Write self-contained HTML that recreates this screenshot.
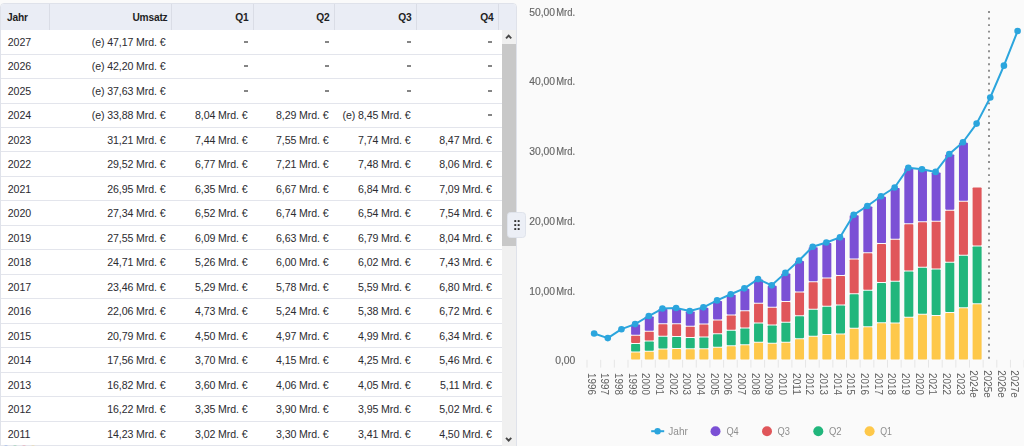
<!DOCTYPE html>
<html><head><meta charset="utf-8">
<style>
html,body{margin:0;padding:0;}
body{width:1024px;height:446px;overflow:hidden;background:#fafafa;position:relative;font-family:"Liberation Sans",sans-serif;}
#panel{position:absolute;left:0;top:3px;width:517px;height:460px;background:#fff;border:1px solid #dfe2ea;border-radius:4px 4px 0 0;box-sizing:border-box;overflow:hidden;}
#head{position:absolute;left:0;top:0;right:0;height:26px;background:#eaedf5;}
#head div{position:absolute;top:0;height:26px;line-height:28.6px;font-size:10.2px;letter-spacing:-0.2px;font-weight:bold;color:#1f1f24;box-sizing:border-box;border-right:1px solid #dadde6;}
#head .c0{padding-left:6px;} #head .c1{padding-right:3px;} #head .c2,#head .c3,#head .c4,#head .c5{padding-right:4px;}
#body{position:absolute;left:0;top:0;width:501px;height:460px;}
.dv{position:absolute;left:0;width:501px;height:1px;background:#e3e5ec;}
.r{position:absolute;left:0;width:501px;height:12px;}
.r div{position:absolute;top:0;height:12px;line-height:12px;letter-spacing:-0.1px;font-size:10.6px;color:#2b2b30;box-sizing:border-box;white-space:nowrap;}
.c0{left:0;width:49px;padding-left:6.8px;text-align:left;}
.c1{left:49px;width:121.5px;padding-right:6px;text-align:right;}
.c2{left:170.5px;width:82px;padding-right:6px;text-align:right;}
.c3{left:252.5px;width:81px;padding-right:6px;text-align:right;}
.c4{left:333.5px;width:82px;padding-right:6px;text-align:right;}
.c5{left:415.5px;width:82px;padding-right:6.8px;text-align:right;}
span.dash{display:inline-block;width:3.4px;height:2px;background:#858585;vertical-align:top;margin-top:4.7px;margin-right:0px;}
#sb{position:absolute;left:501px;top:26px;width:14px;height:440px;background:#f0f0f0;}
#thumb{position:absolute;left:0;top:14px;width:14px;height:202px;background:#c8c8c8;}
#handle{position:absolute;left:506.5px;top:212px;width:19px;height:25.5px;background:#eceff6;border:1px solid #dfe3eb;border-radius:3.5px;box-sizing:border-box;}
svg{position:absolute;left:0;top:0;}
.ax{font-size:10.2px;fill:#666;stroke:#666;stroke-width:0.15px;font-family:"Liberation Sans",sans-serif;}
.xl{font-size:10px;fill:#606060;font-family:"Liberation Sans",sans-serif;}
.lg{font-size:10.6px;fill:#8f8f8f;font-family:"Liberation Sans",sans-serif;}
</style></head><body>
<div id="panel">
<div id="head">
<div class="c0">Jahr</div><div class="c1">Umsatz</div><div class="c2">Q1</div><div class="c3">Q2</div><div class="c4">Q3</div><div class="c5">Q4</div>
</div>
<div id="body">
<div class="dv" style="top:49.60px"></div><div class="r" style="top:32.00px"><div class="c0">2027</div><div class="c1">(e) 47,17 Mrd. €</div><div class="c2"><span class="dash"></span></div><div class="c3"><span class="dash"></span></div><div class="c4"><span class="dash"></span></div><div class="c5"><span class="dash"></span></div></div><div class="dv" style="top:74.07px"></div><div class="r" style="top:56.47px"><div class="c0">2026</div><div class="c1">(e) 42,20 Mrd. €</div><div class="c2"><span class="dash"></span></div><div class="c3"><span class="dash"></span></div><div class="c4"><span class="dash"></span></div><div class="c5"><span class="dash"></span></div></div><div class="dv" style="top:98.54px"></div><div class="r" style="top:80.94px"><div class="c0">2025</div><div class="c1">(e) 37,63 Mrd. €</div><div class="c2"><span class="dash"></span></div><div class="c3"><span class="dash"></span></div><div class="c4"><span class="dash"></span></div><div class="c5"><span class="dash"></span></div></div><div class="dv" style="top:123.01px"></div><div class="r" style="top:105.41px"><div class="c0">2024</div><div class="c1">(e) 33,88 Mrd. €</div><div class="c2">8,04 Mrd. €</div><div class="c3">8,29 Mrd. €</div><div class="c4">(e) 8,45 Mrd. €</div><div class="c5"><span class="dash"></span></div></div><div class="dv" style="top:147.48px"></div><div class="r" style="top:129.88px"><div class="c0">2023</div><div class="c1">31,21 Mrd. €</div><div class="c2">7,44 Mrd. €</div><div class="c3">7,55 Mrd. €</div><div class="c4">7,74 Mrd. €</div><div class="c5">8,47 Mrd. €</div></div><div class="dv" style="top:171.95px"></div><div class="r" style="top:154.35px"><div class="c0">2022</div><div class="c1">29,52 Mrd. €</div><div class="c2">6,77 Mrd. €</div><div class="c3">7,21 Mrd. €</div><div class="c4">7,48 Mrd. €</div><div class="c5">8,06 Mrd. €</div></div><div class="dv" style="top:196.42px"></div><div class="r" style="top:178.82px"><div class="c0">2021</div><div class="c1">26,95 Mrd. €</div><div class="c2">6,35 Mrd. €</div><div class="c3">6,67 Mrd. €</div><div class="c4">6,84 Mrd. €</div><div class="c5">7,09 Mrd. €</div></div><div class="dv" style="top:220.89px"></div><div class="r" style="top:203.29px"><div class="c0">2020</div><div class="c1">27,34 Mrd. €</div><div class="c2">6,52 Mrd. €</div><div class="c3">6,74 Mrd. €</div><div class="c4">6,54 Mrd. €</div><div class="c5">7,54 Mrd. €</div></div><div class="dv" style="top:245.36px"></div><div class="r" style="top:227.76px"><div class="c0">2019</div><div class="c1">27,55 Mrd. €</div><div class="c2">6,09 Mrd. €</div><div class="c3">6,63 Mrd. €</div><div class="c4">6,79 Mrd. €</div><div class="c5">8,04 Mrd. €</div></div><div class="dv" style="top:269.83px"></div><div class="r" style="top:252.23px"><div class="c0">2018</div><div class="c1">24,71 Mrd. €</div><div class="c2">5,26 Mrd. €</div><div class="c3">6,00 Mrd. €</div><div class="c4">6,02 Mrd. €</div><div class="c5">7,43 Mrd. €</div></div><div class="dv" style="top:294.30px"></div><div class="r" style="top:276.70px"><div class="c0">2017</div><div class="c1">23,46 Mrd. €</div><div class="c2">5,29 Mrd. €</div><div class="c3">5,78 Mrd. €</div><div class="c4">5,59 Mrd. €</div><div class="c5">6,80 Mrd. €</div></div><div class="dv" style="top:318.77px"></div><div class="r" style="top:301.17px"><div class="c0">2016</div><div class="c1">22,06 Mrd. €</div><div class="c2">4,73 Mrd. €</div><div class="c3">5,24 Mrd. €</div><div class="c4">5,38 Mrd. €</div><div class="c5">6,72 Mrd. €</div></div><div class="dv" style="top:343.24px"></div><div class="r" style="top:325.64px"><div class="c0">2015</div><div class="c1">20,79 Mrd. €</div><div class="c2">4,50 Mrd. €</div><div class="c3">4,97 Mrd. €</div><div class="c4">4,99 Mrd. €</div><div class="c5">6,34 Mrd. €</div></div><div class="dv" style="top:367.71px"></div><div class="r" style="top:350.11px"><div class="c0">2014</div><div class="c1">17,56 Mrd. €</div><div class="c2">3,70 Mrd. €</div><div class="c3">4,15 Mrd. €</div><div class="c4">4,25 Mrd. €</div><div class="c5">5,46 Mrd. €</div></div><div class="dv" style="top:392.18px"></div><div class="r" style="top:374.58px"><div class="c0">2013</div><div class="c1">16,82 Mrd. €</div><div class="c2">3,60 Mrd. €</div><div class="c3">4,06 Mrd. €</div><div class="c4">4,05 Mrd. €</div><div class="c5">5,11 Mrd. €</div></div><div class="dv" style="top:416.65px"></div><div class="r" style="top:399.05px"><div class="c0">2012</div><div class="c1">16,22 Mrd. €</div><div class="c2">3,35 Mrd. €</div><div class="c3">3,90 Mrd. €</div><div class="c4">3,95 Mrd. €</div><div class="c5">5,02 Mrd. €</div></div><div class="dv" style="top:441.12px"></div><div class="r" style="top:423.52px"><div class="c0">2011</div><div class="c1">14,23 Mrd. €</div><div class="c2">3,02 Mrd. €</div><div class="c3">3,30 Mrd. €</div><div class="c4">3,41 Mrd. €</div><div class="c5">4,50 Mrd. €</div></div>
</div>
<div id="sb"><svg width="14" height="14" style="position:absolute;left:0;top:0"><path d="M4.05 8.4 L6.65 5.6 L9.25 8.4" fill="none" stroke="#484848" stroke-width="1.9"/></svg><div id="thumb"></div>
<svg width="14" height="14" style="position:absolute;left:0;top:402px"><path d="M4.05 5.9 L6.65 8.7 L9.25 5.9" fill="none" stroke="#484848" stroke-width="1.9"/></svg></div>
</div>
<svg width="40" height="6" style="position:absolute;left:0;top:444px">
<circle cx="6" cy="6" r="4.6" fill="#7da8e8"/><circle cx="15" cy="6" r="4.6" fill="#7cc79a"/><circle cx="24" cy="6" r="4.6" fill="#ea8f9c"/><circle cx="33" cy="6" r="4.6" fill="#efd68e"/>
</svg>
<div id="handle"><svg width="18" height="24" style="position:absolute;left:0;top:0">
<rect x="6.3" y="7.1" width="1.9" height="1.9" fill="#333"/><rect x="9.7" y="7.1" width="1.9" height="1.9" fill="#333"/>
<rect x="6.3" y="11.1" width="1.9" height="1.9" fill="#333"/><rect x="9.7" y="11.1" width="1.9" height="1.9" fill="#333"/>
<rect x="6.3" y="15.1" width="1.9" height="1.9" fill="#333"/><rect x="9.7" y="15.1" width="1.9" height="1.9" fill="#333"/>
</svg></div>
<svg width="506" height="446" viewBox="518 0 506 446" style="left:518px;will-change:transform">
<line x1="587.00" y1="359.8" x2="587.00" y2="367.6" stroke="#e6e6e6" stroke-width="1"/>
<line x1="600.66" y1="359.8" x2="600.66" y2="367.6" stroke="#e6e6e6" stroke-width="1"/>
<line x1="614.32" y1="359.8" x2="614.32" y2="367.6" stroke="#e6e6e6" stroke-width="1"/>
<line x1="627.98" y1="359.8" x2="627.98" y2="367.6" stroke="#e6e6e6" stroke-width="1"/>
<line x1="641.64" y1="359.8" x2="641.64" y2="367.6" stroke="#e6e6e6" stroke-width="1"/>
<line x1="655.30" y1="359.8" x2="655.30" y2="367.6" stroke="#e6e6e6" stroke-width="1"/>
<line x1="668.96" y1="359.8" x2="668.96" y2="367.6" stroke="#e6e6e6" stroke-width="1"/>
<line x1="682.62" y1="359.8" x2="682.62" y2="367.6" stroke="#e6e6e6" stroke-width="1"/>
<line x1="696.28" y1="359.8" x2="696.28" y2="367.6" stroke="#e6e6e6" stroke-width="1"/>
<line x1="709.94" y1="359.8" x2="709.94" y2="367.6" stroke="#e6e6e6" stroke-width="1"/>
<line x1="723.60" y1="359.8" x2="723.60" y2="367.6" stroke="#e6e6e6" stroke-width="1"/>
<line x1="737.26" y1="359.8" x2="737.26" y2="367.6" stroke="#e6e6e6" stroke-width="1"/>
<line x1="750.92" y1="359.8" x2="750.92" y2="367.6" stroke="#e6e6e6" stroke-width="1"/>
<line x1="764.58" y1="359.8" x2="764.58" y2="367.6" stroke="#e6e6e6" stroke-width="1"/>
<line x1="778.24" y1="359.8" x2="778.24" y2="367.6" stroke="#e6e6e6" stroke-width="1"/>
<line x1="791.90" y1="359.8" x2="791.90" y2="367.6" stroke="#e6e6e6" stroke-width="1"/>
<line x1="805.56" y1="359.8" x2="805.56" y2="367.6" stroke="#e6e6e6" stroke-width="1"/>
<line x1="819.22" y1="359.8" x2="819.22" y2="367.6" stroke="#e6e6e6" stroke-width="1"/>
<line x1="832.88" y1="359.8" x2="832.88" y2="367.6" stroke="#e6e6e6" stroke-width="1"/>
<line x1="846.54" y1="359.8" x2="846.54" y2="367.6" stroke="#e6e6e6" stroke-width="1"/>
<line x1="860.20" y1="359.8" x2="860.20" y2="367.6" stroke="#e6e6e6" stroke-width="1"/>
<line x1="873.86" y1="359.8" x2="873.86" y2="367.6" stroke="#e6e6e6" stroke-width="1"/>
<line x1="887.52" y1="359.8" x2="887.52" y2="367.6" stroke="#e6e6e6" stroke-width="1"/>
<line x1="901.18" y1="359.8" x2="901.18" y2="367.6" stroke="#e6e6e6" stroke-width="1"/>
<line x1="914.84" y1="359.8" x2="914.84" y2="367.6" stroke="#e6e6e6" stroke-width="1"/>
<line x1="928.50" y1="359.8" x2="928.50" y2="367.6" stroke="#e6e6e6" stroke-width="1"/>
<line x1="942.16" y1="359.8" x2="942.16" y2="367.6" stroke="#e6e6e6" stroke-width="1"/>
<line x1="955.82" y1="359.8" x2="955.82" y2="367.6" stroke="#e6e6e6" stroke-width="1"/>
<line x1="969.48" y1="359.8" x2="969.48" y2="367.6" stroke="#e6e6e6" stroke-width="1"/>
<line x1="983.14" y1="359.8" x2="983.14" y2="367.6" stroke="#e6e6e6" stroke-width="1"/>
<line x1="996.80" y1="359.8" x2="996.80" y2="367.6" stroke="#e6e6e6" stroke-width="1"/>
<line x1="1010.46" y1="359.8" x2="1010.46" y2="367.6" stroke="#e6e6e6" stroke-width="1"/>
<line x1="1024.12" y1="359.8" x2="1024.12" y2="367.6" stroke="#e6e6e6" stroke-width="1"/>
<rect x="631.11" y="352.60" width="9.00" height="6.90" rx="0.8" fill="#fec84a"/>
<rect x="631.11" y="343.90" width="9.00" height="7.70" rx="0.8" fill="#21b67c"/>
<rect x="631.11" y="335.80" width="9.00" height="7.10" rx="0.8" fill="#e0565a"/>
<rect x="631.11" y="324.59" width="9.00" height="10.21" rx="0.8" fill="#7b50d5"/>
<rect x="644.77" y="351.80" width="9.00" height="7.70" rx="0.8" fill="#fec84a"/>
<rect x="644.77" y="341.50" width="9.00" height="9.30" rx="0.8" fill="#21b67c"/>
<rect x="644.77" y="331.70" width="9.00" height="8.80" rx="0.8" fill="#e0565a"/>
<rect x="644.77" y="316.51" width="9.00" height="14.19" rx="0.8" fill="#7b50d5"/>
<rect x="658.43" y="349.60" width="9.00" height="9.90" rx="0.8" fill="#fec84a"/>
<rect x="658.43" y="336.80" width="9.00" height="11.80" rx="0.8" fill="#21b67c"/>
<rect x="658.43" y="324.30" width="9.00" height="11.50" rx="0.8" fill="#e0565a"/>
<rect x="658.43" y="309.05" width="9.00" height="14.25" rx="0.8" fill="#7b50d5"/>
<rect x="672.09" y="349.10" width="9.00" height="10.40" rx="0.8" fill="#fec84a"/>
<rect x="672.09" y="337.00" width="9.00" height="11.10" rx="0.8" fill="#21b67c"/>
<rect x="672.09" y="324.30" width="9.00" height="11.70" rx="0.8" fill="#e0565a"/>
<rect x="672.09" y="308.57" width="9.00" height="14.73" rx="0.8" fill="#7b50d5"/>
<rect x="685.75" y="349.30" width="9.00" height="10.20" rx="0.8" fill="#fec84a"/>
<rect x="685.75" y="338.00" width="9.00" height="10.30" rx="0.8" fill="#21b67c"/>
<rect x="685.75" y="326.80" width="9.00" height="10.20" rx="0.8" fill="#e0565a"/>
<rect x="685.75" y="311.49" width="9.00" height="14.31" rx="0.8" fill="#7b50d5"/>
<rect x="699.41" y="349.30" width="9.00" height="10.20" rx="0.8" fill="#fec84a"/>
<rect x="699.41" y="337.50" width="9.00" height="10.80" rx="0.8" fill="#21b67c"/>
<rect x="699.41" y="324.60" width="9.00" height="11.90" rx="0.8" fill="#e0565a"/>
<rect x="699.41" y="307.87" width="9.00" height="15.73" rx="0.8" fill="#7b50d5"/>
<rect x="713.07" y="347.80" width="9.00" height="11.70" rx="0.8" fill="#fec84a"/>
<rect x="713.07" y="334.20" width="9.00" height="12.60" rx="0.8" fill="#21b67c"/>
<rect x="713.07" y="320.40" width="9.00" height="12.80" rx="0.8" fill="#e0565a"/>
<rect x="713.07" y="300.90" width="9.00" height="18.50" rx="0.8" fill="#7b50d5"/>
<rect x="726.73" y="346.30" width="9.00" height="13.20" rx="0.8" fill="#fec84a"/>
<rect x="726.73" y="330.70" width="9.00" height="14.60" rx="0.8" fill="#21b67c"/>
<rect x="726.73" y="315.40" width="9.00" height="14.30" rx="0.8" fill="#e0565a"/>
<rect x="726.73" y="294.77" width="9.00" height="19.63" rx="0.8" fill="#7b50d5"/>
<rect x="740.39" y="345.30" width="9.00" height="14.20" rx="0.8" fill="#fec84a"/>
<rect x="740.39" y="328.40" width="9.00" height="15.90" rx="0.8" fill="#21b67c"/>
<rect x="740.39" y="311.30" width="9.00" height="16.10" rx="0.8" fill="#e0565a"/>
<rect x="740.39" y="288.85" width="9.00" height="21.45" rx="0.8" fill="#7b50d5"/>
<rect x="754.05" y="342.80" width="9.00" height="16.70" rx="0.8" fill="#fec84a"/>
<rect x="754.05" y="323.60" width="9.00" height="18.20" rx="0.8" fill="#21b67c"/>
<rect x="754.05" y="303.70" width="9.00" height="18.90" rx="0.8" fill="#e0565a"/>
<rect x="754.05" y="279.58" width="9.00" height="23.12" rx="0.8" fill="#7b50d5"/>
<rect x="767.71" y="343.70" width="9.00" height="15.80" rx="0.8" fill="#fec84a"/>
<rect x="767.71" y="325.40" width="9.00" height="17.30" rx="0.8" fill="#21b67c"/>
<rect x="767.71" y="307.80" width="9.00" height="16.60" rx="0.8" fill="#e0565a"/>
<rect x="767.71" y="285.85" width="9.00" height="20.95" rx="0.8" fill="#7b50d5"/>
<rect x="781.37" y="342.80" width="9.00" height="16.70" rx="0.8" fill="#fec84a"/>
<rect x="781.37" y="322.70" width="9.00" height="19.10" rx="0.8" fill="#21b67c"/>
<rect x="781.37" y="301.90" width="9.00" height="19.80" rx="0.8" fill="#e0565a"/>
<rect x="781.37" y="273.38" width="9.00" height="27.52" rx="0.8" fill="#7b50d5"/>
<rect x="795.03" y="339.16" width="9.00" height="20.34" rx="0.8" fill="#fec84a"/>
<rect x="795.03" y="316.16" width="9.00" height="21.99" rx="0.8" fill="#21b67c"/>
<rect x="795.03" y="292.40" width="9.00" height="22.76" rx="0.8" fill="#e0565a"/>
<rect x="795.03" y="261.05" width="9.00" height="30.36" rx="0.8" fill="#7b50d5"/>
<rect x="808.69" y="336.86" width="9.00" height="22.64" rx="0.8" fill="#fec84a"/>
<rect x="808.69" y="309.68" width="9.00" height="26.18" rx="0.8" fill="#21b67c"/>
<rect x="808.69" y="282.16" width="9.00" height="26.52" rx="0.8" fill="#e0565a"/>
<rect x="808.69" y="247.18" width="9.00" height="33.98" rx="0.8" fill="#7b50d5"/>
<rect x="822.35" y="335.12" width="9.00" height="24.38" rx="0.8" fill="#fec84a"/>
<rect x="822.35" y="306.83" width="9.00" height="27.29" rx="0.8" fill="#21b67c"/>
<rect x="822.35" y="278.60" width="9.00" height="27.22" rx="0.8" fill="#e0565a"/>
<rect x="822.35" y="243.00" width="9.00" height="34.61" rx="0.8" fill="#7b50d5"/>
<rect x="836.01" y="334.42" width="9.00" height="25.08" rx="0.8" fill="#fec84a"/>
<rect x="836.01" y="305.50" width="9.00" height="27.92" rx="0.8" fill="#21b67c"/>
<rect x="836.01" y="275.89" width="9.00" height="28.61" rx="0.8" fill="#e0565a"/>
<rect x="836.01" y="237.84" width="9.00" height="37.05" rx="0.8" fill="#7b50d5"/>
<rect x="849.67" y="328.84" width="9.00" height="30.66" rx="0.8" fill="#fec84a"/>
<rect x="849.67" y="294.21" width="9.00" height="33.63" rx="0.8" fill="#21b67c"/>
<rect x="849.67" y="259.44" width="9.00" height="33.77" rx="0.8" fill="#e0565a"/>
<rect x="849.67" y="215.27" width="9.00" height="43.18" rx="0.8" fill="#7b50d5"/>
<rect x="863.33" y="327.24" width="9.00" height="32.26" rx="0.8" fill="#fec84a"/>
<rect x="863.33" y="290.73" width="9.00" height="35.51" rx="0.8" fill="#21b67c"/>
<rect x="863.33" y="253.24" width="9.00" height="36.49" rx="0.8" fill="#e0565a"/>
<rect x="863.33" y="206.42" width="9.00" height="45.82" rx="0.8" fill="#7b50d5"/>
<rect x="876.99" y="323.34" width="9.00" height="36.16" rx="0.8" fill="#fec84a"/>
<rect x="876.99" y="283.06" width="9.00" height="39.28" rx="0.8" fill="#21b67c"/>
<rect x="876.99" y="244.11" width="9.00" height="37.95" rx="0.8" fill="#e0565a"/>
<rect x="876.99" y="196.73" width="9.00" height="46.38" rx="0.8" fill="#7b50d5"/>
<rect x="890.65" y="323.55" width="9.00" height="35.95" rx="0.8" fill="#fec84a"/>
<rect x="890.65" y="281.74" width="9.00" height="40.81" rx="0.8" fill="#21b67c"/>
<rect x="890.65" y="239.79" width="9.00" height="40.95" rx="0.8" fill="#e0565a"/>
<rect x="890.65" y="188.02" width="9.00" height="50.77" rx="0.8" fill="#7b50d5"/>
<rect x="904.31" y="317.76" width="9.00" height="41.74" rx="0.8" fill="#fec84a"/>
<rect x="904.31" y="271.57" width="9.00" height="45.20" rx="0.8" fill="#21b67c"/>
<rect x="904.31" y="224.25" width="9.00" height="46.31" rx="0.8" fill="#e0565a"/>
<rect x="904.31" y="168.23" width="9.00" height="55.02" rx="0.8" fill="#7b50d5"/>
<rect x="917.97" y="314.77" width="9.00" height="44.73" rx="0.8" fill="#fec84a"/>
<rect x="917.97" y="267.80" width="9.00" height="45.96" rx="0.8" fill="#21b67c"/>
<rect x="917.97" y="222.23" width="9.00" height="44.57" rx="0.8" fill="#e0565a"/>
<rect x="917.97" y="169.69" width="9.00" height="51.54" rx="0.8" fill="#7b50d5"/>
<rect x="931.63" y="315.95" width="9.00" height="43.55" rx="0.8" fill="#fec84a"/>
<rect x="931.63" y="269.48" width="9.00" height="45.48" rx="0.8" fill="#21b67c"/>
<rect x="931.63" y="221.82" width="9.00" height="46.66" rx="0.8" fill="#e0565a"/>
<rect x="931.63" y="172.41" width="9.00" height="48.40" rx="0.8" fill="#7b50d5"/>
<rect x="945.29" y="313.03" width="9.00" height="46.47" rx="0.8" fill="#fec84a"/>
<rect x="945.29" y="262.79" width="9.00" height="49.24" rx="0.8" fill="#21b67c"/>
<rect x="945.29" y="210.67" width="9.00" height="51.12" rx="0.8" fill="#e0565a"/>
<rect x="945.29" y="154.50" width="9.00" height="55.16" rx="0.8" fill="#7b50d5"/>
<rect x="958.95" y="308.36" width="9.00" height="51.14" rx="0.8" fill="#fec84a"/>
<rect x="958.95" y="255.75" width="9.00" height="51.61" rx="0.8" fill="#21b67c"/>
<rect x="958.95" y="201.82" width="9.00" height="52.93" rx="0.8" fill="#e0565a"/>
<rect x="958.95" y="142.80" width="9.00" height="58.02" rx="0.8" fill="#7b50d5"/>
<rect x="972.61" y="304.18" width="9.00" height="55.32" rx="0.8" fill="#fec84a"/>
<rect x="972.61" y="246.41" width="9.00" height="56.76" rx="0.8" fill="#21b67c"/>
<rect x="972.61" y="187.53" width="9.00" height="57.88" rx="0.8" fill="#e0565a"/>
<line x1="989" y1="11.09" x2="989" y2="359" stroke="#8c8c8c" stroke-width="1.9" stroke-dasharray="1.9 4.623"/>
<polyline points="594.13,333.43 607.79,338.10 621.45,329.18 635.11,324.09 648.77,316.01 662.43,308.55 676.09,308.07 689.75,310.99 703.41,307.37 717.07,300.40 730.73,294.27 744.39,288.35 758.05,279.08 771.71,285.35 785.37,272.88 799.03,260.55 812.69,246.68 826.35,242.50 840.01,237.34 853.67,214.84 867.33,205.99 880.99,196.23 894.65,187.52 908.31,167.73 921.97,169.19 935.63,171.91 949.29,154.00 962.95,142.23 976.61,123.62 990.27,97.49 1003.93,65.65 1017.59,31.02" fill="none" stroke="#2ba5dd" stroke-width="2" stroke-linejoin="round"/>
<circle cx="594.13" cy="333.43" r="3.3" fill="#2ba5dd"/>
<circle cx="607.79" cy="338.10" r="3.3" fill="#2ba5dd"/>
<circle cx="621.45" cy="329.18" r="3.3" fill="#2ba5dd"/>
<circle cx="635.11" cy="324.09" r="3.3" fill="#2ba5dd"/>
<circle cx="648.77" cy="316.01" r="3.3" fill="#2ba5dd"/>
<circle cx="662.43" cy="308.55" r="3.3" fill="#2ba5dd"/>
<circle cx="676.09" cy="308.07" r="3.3" fill="#2ba5dd"/>
<circle cx="689.75" cy="310.99" r="3.3" fill="#2ba5dd"/>
<circle cx="703.41" cy="307.37" r="3.3" fill="#2ba5dd"/>
<circle cx="717.07" cy="300.40" r="3.3" fill="#2ba5dd"/>
<circle cx="730.73" cy="294.27" r="3.3" fill="#2ba5dd"/>
<circle cx="744.39" cy="288.35" r="3.3" fill="#2ba5dd"/>
<circle cx="758.05" cy="279.08" r="3.3" fill="#2ba5dd"/>
<circle cx="771.71" cy="285.35" r="3.3" fill="#2ba5dd"/>
<circle cx="785.37" cy="272.88" r="3.3" fill="#2ba5dd"/>
<circle cx="799.03" cy="260.55" r="3.3" fill="#2ba5dd"/>
<circle cx="812.69" cy="246.68" r="3.3" fill="#2ba5dd"/>
<circle cx="826.35" cy="242.50" r="3.3" fill="#2ba5dd"/>
<circle cx="840.01" cy="237.34" r="3.3" fill="#2ba5dd"/>
<circle cx="853.67" cy="214.84" r="3.3" fill="#2ba5dd"/>
<circle cx="867.33" cy="205.99" r="3.3" fill="#2ba5dd"/>
<circle cx="880.99" cy="196.23" r="3.3" fill="#2ba5dd"/>
<circle cx="894.65" cy="187.52" r="3.3" fill="#2ba5dd"/>
<circle cx="908.31" cy="167.73" r="3.3" fill="#2ba5dd"/>
<circle cx="921.97" cy="169.19" r="3.3" fill="#2ba5dd"/>
<circle cx="935.63" cy="171.91" r="3.3" fill="#2ba5dd"/>
<circle cx="949.29" cy="154.00" r="3.3" fill="#2ba5dd"/>
<circle cx="962.95" cy="142.23" r="3.3" fill="#2ba5dd"/>
<circle cx="976.61" cy="123.62" r="3.3" fill="#2ba5dd"/>
<circle cx="990.27" cy="97.49" r="3.3" fill="#2ba5dd"/>
<circle cx="1003.93" cy="65.65" r="3.3" fill="#2ba5dd"/>
<circle cx="1017.59" cy="31.02" r="3.3" fill="#2ba5dd"/>
<text x="555.2" y="364.20" textLength="20.2" lengthAdjust="spacingAndGlyphs" class="ax">0,00</text>
<text x="529.2" y="294.52" textLength="25.9" lengthAdjust="spacingAndGlyphs" class="ax">10,00</text>
<text x="556.2" y="294.52" textLength="18.8" lengthAdjust="spacingAndGlyphs" class="ax">Mrd.</text>
<text x="529.2" y="224.84" textLength="25.9" lengthAdjust="spacingAndGlyphs" class="ax">20,00</text>
<text x="556.2" y="224.84" textLength="18.8" lengthAdjust="spacingAndGlyphs" class="ax">Mrd.</text>
<text x="529.2" y="155.16" textLength="25.9" lengthAdjust="spacingAndGlyphs" class="ax">30,00</text>
<text x="556.2" y="155.16" textLength="18.8" lengthAdjust="spacingAndGlyphs" class="ax">Mrd.</text>
<text x="529.2" y="85.48" textLength="25.9" lengthAdjust="spacingAndGlyphs" class="ax">40,00</text>
<text x="556.2" y="85.48" textLength="18.8" lengthAdjust="spacingAndGlyphs" class="ax">Mrd.</text>
<text x="529.2" y="15.80" textLength="25.9" lengthAdjust="spacingAndGlyphs" class="ax">50,00</text>
<text x="556.2" y="15.80" textLength="18.8" lengthAdjust="spacingAndGlyphs" class="ax">Mrd.</text>
<text transform="translate(587.73,373.10) rotate(90)" textLength="21.8" lengthAdjust="spacingAndGlyphs" class="xl">1996</text>
<text transform="translate(601.39,373.10) rotate(90)" textLength="21.8" lengthAdjust="spacingAndGlyphs" class="xl">1997</text>
<text transform="translate(615.05,373.10) rotate(90)" textLength="21.8" lengthAdjust="spacingAndGlyphs" class="xl">1998</text>
<text transform="translate(628.71,373.10) rotate(90)" textLength="21.8" lengthAdjust="spacingAndGlyphs" class="xl">1999</text>
<text transform="translate(642.37,373.10) rotate(90)" textLength="21.8" lengthAdjust="spacingAndGlyphs" class="xl">2000</text>
<text transform="translate(656.03,373.10) rotate(90)" textLength="21.8" lengthAdjust="spacingAndGlyphs" class="xl">2001</text>
<text transform="translate(669.69,373.10) rotate(90)" textLength="21.8" lengthAdjust="spacingAndGlyphs" class="xl">2002</text>
<text transform="translate(683.35,373.10) rotate(90)" textLength="21.8" lengthAdjust="spacingAndGlyphs" class="xl">2003</text>
<text transform="translate(697.01,373.10) rotate(90)" textLength="21.8" lengthAdjust="spacingAndGlyphs" class="xl">2004</text>
<text transform="translate(710.67,373.10) rotate(90)" textLength="21.8" lengthAdjust="spacingAndGlyphs" class="xl">2005</text>
<text transform="translate(724.33,373.10) rotate(90)" textLength="21.8" lengthAdjust="spacingAndGlyphs" class="xl">2006</text>
<text transform="translate(737.99,373.10) rotate(90)" textLength="21.8" lengthAdjust="spacingAndGlyphs" class="xl">2007</text>
<text transform="translate(751.65,373.10) rotate(90)" textLength="21.8" lengthAdjust="spacingAndGlyphs" class="xl">2008</text>
<text transform="translate(765.31,373.10) rotate(90)" textLength="21.8" lengthAdjust="spacingAndGlyphs" class="xl">2009</text>
<text transform="translate(778.97,373.10) rotate(90)" textLength="21.8" lengthAdjust="spacingAndGlyphs" class="xl">2010</text>
<text transform="translate(792.63,373.10) rotate(90)" textLength="21.8" lengthAdjust="spacingAndGlyphs" class="xl">2011</text>
<text transform="translate(806.29,373.10) rotate(90)" textLength="21.8" lengthAdjust="spacingAndGlyphs" class="xl">2012</text>
<text transform="translate(819.95,373.10) rotate(90)" textLength="21.8" lengthAdjust="spacingAndGlyphs" class="xl">2013</text>
<text transform="translate(833.61,373.10) rotate(90)" textLength="21.8" lengthAdjust="spacingAndGlyphs" class="xl">2014</text>
<text transform="translate(847.27,373.10) rotate(90)" textLength="21.8" lengthAdjust="spacingAndGlyphs" class="xl">2015</text>
<text transform="translate(860.93,373.10) rotate(90)" textLength="21.8" lengthAdjust="spacingAndGlyphs" class="xl">2016</text>
<text transform="translate(874.59,373.10) rotate(90)" textLength="21.8" lengthAdjust="spacingAndGlyphs" class="xl">2017</text>
<text transform="translate(888.25,373.10) rotate(90)" textLength="21.8" lengthAdjust="spacingAndGlyphs" class="xl">2018</text>
<text transform="translate(901.91,373.10) rotate(90)" textLength="21.8" lengthAdjust="spacingAndGlyphs" class="xl">2019</text>
<text transform="translate(915.57,373.10) rotate(90)" textLength="21.8" lengthAdjust="spacingAndGlyphs" class="xl">2020</text>
<text transform="translate(929.23,373.10) rotate(90)" textLength="21.8" lengthAdjust="spacingAndGlyphs" class="xl">2021</text>
<text transform="translate(942.89,373.10) rotate(90)" textLength="21.8" lengthAdjust="spacingAndGlyphs" class="xl">2022</text>
<text transform="translate(956.55,373.10) rotate(90)" textLength="21.8" lengthAdjust="spacingAndGlyphs" class="xl">2023</text>
<text transform="translate(970.21,370.30) rotate(90)" textLength="27.4" lengthAdjust="spacingAndGlyphs" class="xl">2024e</text>
<text transform="translate(983.87,370.30) rotate(90)" textLength="27.4" lengthAdjust="spacingAndGlyphs" class="xl">2025e</text>
<text transform="translate(997.53,370.30) rotate(90)" textLength="27.4" lengthAdjust="spacingAndGlyphs" class="xl">2026e</text>
<text transform="translate(1011.19,370.30) rotate(90)" textLength="27.4" lengthAdjust="spacingAndGlyphs" class="xl">2027e</text>
<line x1="651.2" y1="431.2" x2="664.2" y2="431.2" stroke="#2ba5dd" stroke-width="2"/>
<circle cx="657.6" cy="431.2" r="3.2" fill="#2ba5dd"/>
<text x="668.3" y="434.8" textLength="19.6" lengthAdjust="spacingAndGlyphs" class="lg">Jahr</text>
<circle cx="715.5" cy="431.2" r="5" fill="#7b50d5"/>
<text x="726.4" y="434.8" textLength="12.3" lengthAdjust="spacingAndGlyphs" class="lg">Q4</text>
<circle cx="767.0" cy="431.2" r="5" fill="#e0565a"/>
<text x="777.6" y="434.8" textLength="12.4" lengthAdjust="spacingAndGlyphs" class="lg">Q3</text>
<circle cx="818.3" cy="431.2" r="5" fill="#21b67c"/>
<text x="828.9" y="434.8" textLength="12.7" lengthAdjust="spacingAndGlyphs" class="lg">Q2</text>
<circle cx="869.6" cy="431.2" r="5" fill="#fec84a"/>
<text x="880.2" y="434.8" textLength="11.8" lengthAdjust="spacingAndGlyphs" class="lg">Q1</text>
</svg>
</body></html>
